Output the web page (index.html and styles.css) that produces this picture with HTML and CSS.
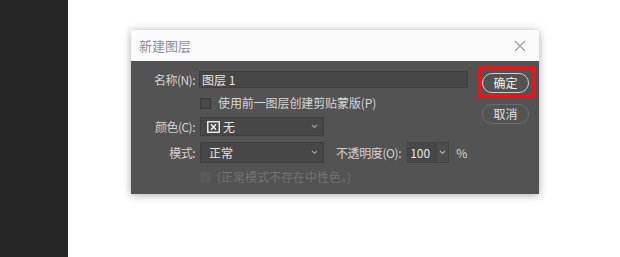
FILE: index.html
```html
<!DOCTYPE html>
<html lang="zh-CN">
<head>
<meta charset="utf-8">
<title>新建图层</title>
<link rel="stylesheet" href="styles.css">
</head>
<body>
<div class="page">
  <aside class="strip"></aside>
  <main class="canvas">
    <section class="dialog">
      <header class="titlebar">
        <span class="title">新建图层</span>
        <svg class="close" width="12" height="12" viewBox="0 0 12 12"><path d="M1 1L11 11M11 1L1 11" stroke="#9a9a9a" stroke-width="1.1" fill="none"/></svg>
      </header>
      <div class="body">
        <div class="form">
          <div class="row r1">
            <span class="lbl">名称(N):</span>
            <div class="text-input">图层 1</div>
          </div>
          <div class="row r2">
            <span class="cb"></span>
            <span class="cb-text">使用前一图层创建剪贴蒙版(P)</span>
          </div>
          <div class="row r3">
            <span class="lbl">颜色(C):</span>
            <div class="select">
              <svg class="none-icon" width="13" height="12" viewBox="0 0 13 12"><rect x="0.75" y="0.75" width="11.5" height="10.5" fill="none" stroke="#e6e6e6" stroke-width="1.5"/><path d="M4 3.3L9 8.7M9 3.3L4 8.7" stroke="#f0f0f0" stroke-width="1.6"/></svg>
              <span class="sel-text">无</span>
              <svg class="chev" width="7" height="5" viewBox="0 0 7 5"><path d="M1 1L3.5 3.5L6 1" stroke="#9c9c9c" stroke-width="1.2" fill="none"/></svg>
            </div>
          </div>
          <div class="row r4">
            <span class="lbl">模式:</span>
            <div class="select tall">
              <span class="sel-text">正常</span>
              <svg class="chev" width="7" height="5" viewBox="0 0 7 5"><path d="M1 1L3.5 3.5L6 1" stroke="#9c9c9c" stroke-width="1.2" fill="none"/></svg>
            </div>
            <span class="op-lbl">不透明度(O):</span>
            <div class="num">
              <span class="num-val">100</span>
              <span class="num-spin"><svg width="7" height="5" viewBox="0 0 7 5"><path d="M1 1L3.5 3.5L6 1" stroke="#a8a8a8" stroke-width="1.2" fill="none"/></svg></span>
            </div>
            <span class="pct">%</span>
          </div>
          <div class="row r5">
            <span class="cb disabled"></span>
            <span class="dis-text">(正常模式不存在中性色。)</span>
          </div>
        </div>
        <div class="buttons">
          <div class="btn-wrap">
            <button class="btn primary">确定</button>
            <span class="highlight"></span>
          </div>
          <button class="btn">取消</button>
        </div>
      </div>
    </section>
  </main>
</div>
</body>
</html>
```

FILE: styles.css
```css
* { box-sizing: border-box; }
html, body { margin: 0; padding: 0; }
body {
  background: #ffffff;
  font-family: "Noto Sans CJK SC", "Noto Sans", sans-serif;
  font-size: 12px;
}
.page {
  display: flex;
  width: 620px;
  height: 257px;
  overflow: hidden;
}
.strip {
  width: 68px;
  flex: none;
  background: #262626;
}
.canvas {
  flex: 1;
  padding: 30px 0 0 63px;
}
.dialog {
  width: 408px;
  height: 164px;
  display: flex;
  flex-direction: column;
  box-shadow: 0 1px 8px rgba(0, 0, 0, 0.35);
}
.titlebar {
  height: 31px;
  flex: none;
  background: #fbfbfb;
  display: flex;
  align-items: center;
  justify-content: space-between;
  padding: 0 13px 0 8px;
}
.title {
  font-size: 13px;
  line-height: 16px;
  color: #8e8e8e;
}
.close { display: block; }
.body {
  flex: 1;
  background: #535353;
  display: flex;
  color: #d4d4d4;
}
.form {
  width: 337px;
  padding-top: 10px;
}
.row {
  display: flex;
  align-items: center;
  line-height: 14px;
}
.lbl {
  width: 64px;
  text-align: right;
  margin-right: 4px;
  white-space: nowrap;
  letter-spacing: -0.5px;
  color: #d2d2d2;
}
.r1 { height: 17px; }
.text-input {
  width: 269px;
  height: 17px;
  background: #474747;
  border: 1px solid #3e3e3e;
  padding-left: 2px;
  display: flex;
  align-items: center;
  color: #e6e6e6;
}
.r2 { height: 16px; margin-top: 7px; padding-left: 69px; }
.cb {
  width: 11px;
  height: 11px;
  flex: none;
  background: #4a4a4a;
  border: 1px solid #3a3a3a;
  margin-right: 7px;
}
.cb-text { color: #d6d6d6; letter-spacing: -0.1px; }
.r3 { height: 19px; margin-top: 6px; }
.select {
  width: 124px;
  height: 19px;
  margin-left: 1px;
  background: #474747;
  border: 1px solid #3f3f3f;
  display: flex;
  align-items: center;
  padding: 0 5px 0 6px;
  color: #e4e4e4;
}
.select.tall { height: 21px; padding-left: 8px; }
.none-icon { display: block; flex: none; margin-right: 3px; }
.sel-text { flex: 1; }
.chev { display: block; flex: none; }
.r4 { height: 21px; margin-top: 6px; }
.op-lbl {
  margin-left: 12px;
  margin-right: 6px;
  letter-spacing: -0.4px;
  color: #d2d2d2;
  white-space: nowrap;
}
.num {
  display: flex;
  height: 21px;
  border: 1px solid #444444;
}
.num-val {
  width: 28px;
  background: #474747;
  display: flex;
  align-items: center;
  padding-left: 2px;
  color: #e6e6e6;
}
.num-spin {
  width: 12px;
  background: #4d4d4d;
  border-left: 1px solid #444444;
  display: flex;
  align-items: center;
  justify-content: center;
}
.num-spin svg { display: block; }
.pct { margin-left: 7px; color: #d6d6d6; }
.r5 { height: 14px; margin-top: 7px; padding-left: 69px; }
.cb.disabled {
  background: #5a5a5a;
  border-color: #575757;
  margin-right: 6px;
}
.dis-text { color: #727272; }
.buttons {
  width: 47px;
  margin-left: 14px;
  padding-top: 12px;
  display: flex;
  flex-direction: column;
  gap: 11px;
}
.btn-wrap { position: relative; }
.btn {
  display: block;
  width: 47px;
  height: 20px;
  border-radius: 10px;
  border: 1.5px solid #6c6c6c;
  background: #535353;
  color: #e2e2e2;
  font-family: "Noto Sans CJK SC", sans-serif;
  font-size: 12px;
  line-height: 14px;
  padding: 0;
}
.btn.primary { border-color: #cfcfcf; color: #f0f0f0; }
.highlight {
  position: absolute;
  left: -4px;
  top: -7px;
  right: -7px;
  bottom: -5px;
  border: 4px solid #e3171c;
  pointer-events: none;
}
```
